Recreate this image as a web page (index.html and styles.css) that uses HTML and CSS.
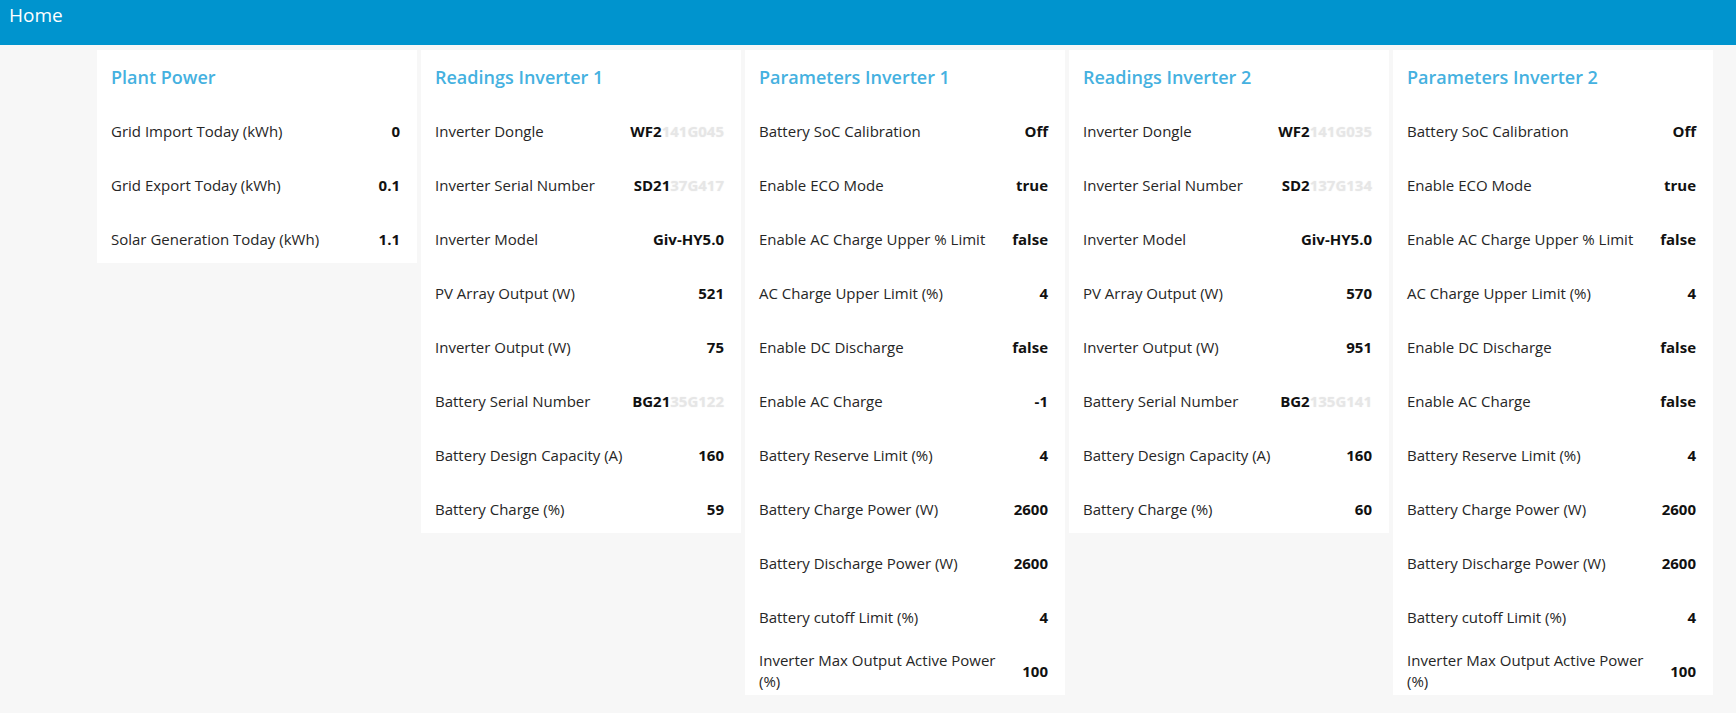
FILE: index.html
```html
<!DOCTYPE html>
<html lang="en">
<head>
  <meta charset="UTF-8">
  <meta name="viewport" content="width=device-width, initial-scale=1.0">
  <title>Home</title>
  <link rel="stylesheet" href="styles.css">
</head>
<body>
  <header class="toolbar">
    <span class="toolbar-title">Home</span>
  </header>

  <main class="dashboard">
    <!-- Plant totals -->
    <section class="card">
      <h2 class="card-title">Plant Power</h2>
      <div class="row"><span class="label">Grid Import Today (kWh)</span><span class="value">0</span></div>
      <div class="row"><span class="label">Grid Export Today (kWh)</span><span class="value">0.1</span></div>
      <div class="row"><span class="label">Solar Generation Today (kWh)</span><span class="value">1.1</span></div>
    </section>

    <!-- Inverter 1 -->
    <section class="card">
      <h2 class="card-title">Readings Inverter 1</h2>
      <div class="row"><span class="label">Inverter Dongle</span><span class="value">WF2<span class="masked">141G045</span></span></div>
      <div class="row"><span class="label">Inverter Serial Number</span><span class="value">SD21<span class="masked">37G417</span></span></div>
      <div class="row"><span class="label">Inverter Model</span><span class="value">Giv-HY5.0</span></div>
      <div class="row"><span class="label">PV Array Output (W)</span><span class="value">521</span></div>
      <div class="row"><span class="label">Inverter Output (W)</span><span class="value">75</span></div>
      <div class="row"><span class="label">Battery Serial Number</span><span class="value">BG21<span class="masked">35G122</span></span></div>
      <div class="row"><span class="label">Battery Design Capacity (A)</span><span class="value">160</span></div>
      <div class="row"><span class="label">Battery Charge (%)</span><span class="value">59</span></div>
    </section>

    <section class="card">
      <h2 class="card-title">Parameters Inverter 1</h2>
      <div class="row"><span class="label">Battery SoC Calibration</span><span class="value">Off</span></div>
      <div class="row"><span class="label">Enable ECO Mode</span><span class="value">true</span></div>
      <div class="row"><span class="label">Enable AC Charge Upper % Limit</span><span class="value">false</span></div>
      <div class="row"><span class="label">AC Charge Upper Limit (%)</span><span class="value">4</span></div>
      <div class="row"><span class="label">Enable DC Discharge</span><span class="value">false</span></div>
      <div class="row"><span class="label">Enable AC Charge</span><span class="value">-1</span></div>
      <div class="row"><span class="label">Battery Reserve Limit (%)</span><span class="value">4</span></div>
      <div class="row"><span class="label">Battery Charge Power (W)</span><span class="value">2600</span></div>
      <div class="row"><span class="label">Battery Discharge Power (W)</span><span class="value">2600</span></div>
      <div class="row"><span class="label">Battery cutoff Limit (%)</span><span class="value">4</span></div>
      <div class="row"><span class="label">Inverter Max Output Active Power (%)</span><span class="value">100</span></div>
    </section>

    <!-- Inverter 2 -->
    <section class="card">
      <h2 class="card-title">Readings Inverter 2</h2>
      <div class="row"><span class="label">Inverter Dongle</span><span class="value">WF2<span class="masked">141G035</span></span></div>
      <div class="row"><span class="label">Inverter Serial Number</span><span class="value">SD2<span class="masked">137G134</span></span></div>
      <div class="row"><span class="label">Inverter Model</span><span class="value">Giv-HY5.0</span></div>
      <div class="row"><span class="label">PV Array Output (W)</span><span class="value">570</span></div>
      <div class="row"><span class="label">Inverter Output (W)</span><span class="value">951</span></div>
      <div class="row"><span class="label">Battery Serial Number</span><span class="value">BG2<span class="masked">135G141</span></span></div>
      <div class="row"><span class="label">Battery Design Capacity (A)</span><span class="value">160</span></div>
      <div class="row"><span class="label">Battery Charge (%)</span><span class="value">60</span></div>
    </section>

    <section class="card">
      <h2 class="card-title">Parameters Inverter 2</h2>
      <div class="row"><span class="label">Battery SoC Calibration</span><span class="value">Off</span></div>
      <div class="row"><span class="label">Enable ECO Mode</span><span class="value">true</span></div>
      <div class="row"><span class="label">Enable AC Charge Upper % Limit</span><span class="value">false</span></div>
      <div class="row"><span class="label">AC Charge Upper Limit (%)</span><span class="value">4</span></div>
      <div class="row"><span class="label">Enable DC Discharge</span><span class="value">false</span></div>
      <div class="row"><span class="label">Enable AC Charge</span><span class="value">false</span></div>
      <div class="row"><span class="label">Battery Reserve Limit (%)</span><span class="value">4</span></div>
      <div class="row"><span class="label">Battery Charge Power (W)</span><span class="value">2600</span></div>
      <div class="row"><span class="label">Battery Discharge Power (W)</span><span class="value">2600</span></div>
      <div class="row"><span class="label">Battery cutoff Limit (%)</span><span class="value">4</span></div>
      <div class="row"><span class="label">Inverter Max Output Active Power (%)</span><span class="value">100</span></div>
    </section>
  </main>
</body>
</html>
```

FILE: styles.css
```css
:root {
  --toolbar: #0094ce;
  --page: #f7f7f7;
  --card: #fff;
  --title: #45b1e0;
  --text: #262626;
  --value: #111;
  --row-height: 48px;
  --row-gap: 6px;
}
html, body {
  margin: 0;
  padding: 0;
  background: var(--page);
  font-family: 'Open Sans', 'Noto Sans', Arial, sans-serif;
  color: var(--text);
}
.toolbar {
  height: 45px;
  background: var(--toolbar);
  padding: 0 9px;
}
.toolbar-title {
  display: block;
  color: #fff;
  font-size: 19px;
  line-height: 30px;
}
.dashboard {
  display: flex;
  align-items: flex-start;
  gap: 4px;
  padding: 5px 0 0 97px;
}
.card {
  width: 320px;
  box-sizing: border-box;
  background: var(--card);
  padding: 3px 17px 0 14px;
}
.card-title {
  margin: 0;
  height: 48px;
  line-height: 48px;
  font-size: 18px;
  font-weight: 600;
  color: var(--title);
}
.row {
  display: flex;
  align-items: center;
  justify-content: space-between;
  gap: 12px;
  height: var(--row-height);
  margin-top: var(--row-gap);
  font-size: 15px;
  line-height: 21px;
}
.label {
  flex: 1 1 auto;
  min-width: 0;
}
.value {
  flex: 0 0 auto;
  font-weight: 700;
  color: var(--value);
  text-align: right;
}
/* serial numbers are partly hidden */
.masked {
  color: #e6e6e6;
  text-shadow: 0 0 2px #f2f2f2;
}
```
